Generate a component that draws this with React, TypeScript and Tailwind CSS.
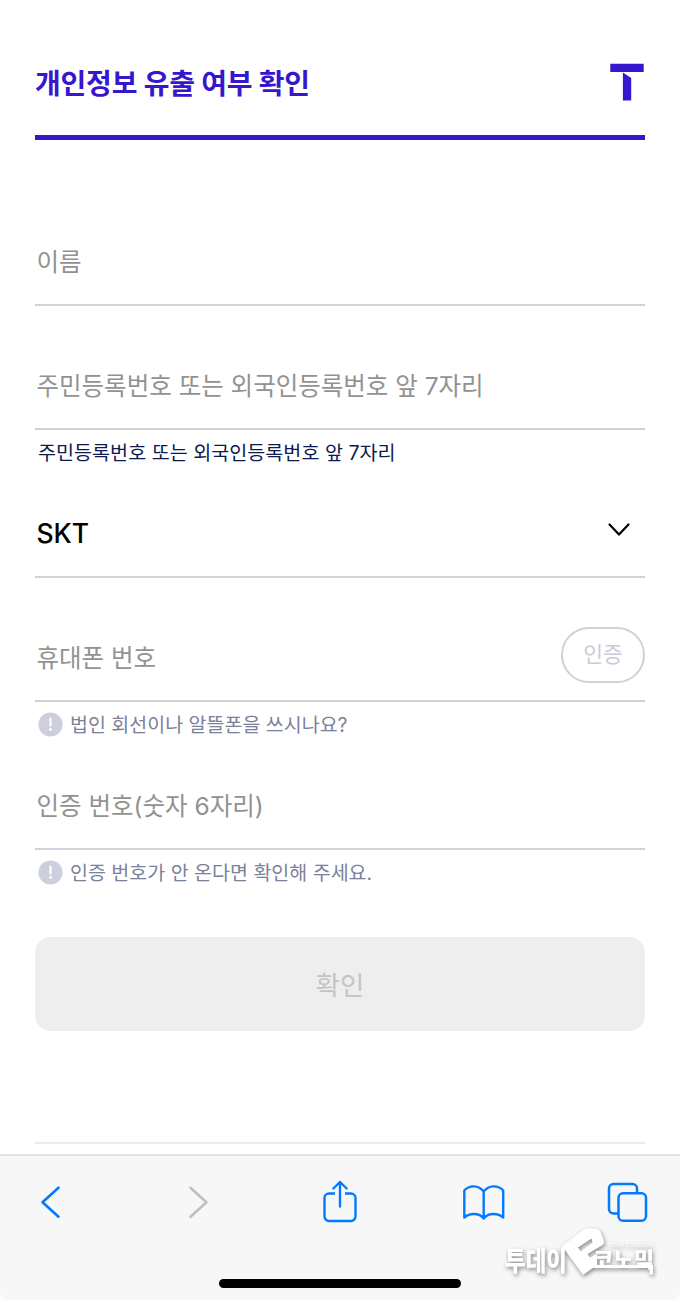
import React, { FC, useState } from 'react'

interface FieldProps {
  placeholder: string,
  value: string,
  onChange: (value: string) => void,
  children?: React.ReactNode
}

const Field: FC<FieldProps> = ({ placeholder, value, onChange, children }) => {
  return (
    <div className="flex h-[88px] items-center border-b-2 border-[#cfd1dc]">
      <input
        className="h-full min-w-0 flex-1 bg-transparent pl-[1.5px] pt-[2px] text-[24.5px] font-[380] text-black outline-none placeholder:text-[#929292] placeholder:opacity-100"
        type="text"
        placeholder={placeholder}
        value={value}
        onChange={e => onChange(e.target.value)} />
      {children}
    </div>
  )
}

interface NoticeProps {
  text: string
}

const Notice: FC<NoticeProps> = ({ text }) => {
  return (
    <div className="flex h-11 items-center gap-[7px] pl-[3px] text-[19.5px] font-[380] text-[#7b819b]">
      <svg className="mt-px h-[25px] w-[25px] shrink-0" viewBox="0 0 25 25">
        <circle cx="12.5" cy="12.5" r="12.1" fill="#cdd0dc" />
        <path d="M12.5 6.5v7.2" stroke="#fff" strokeWidth="2.2" strokeLinecap="round" />
        <circle cx="12.5" cy="17.5" r="1.4" fill="#fff" />
      </svg>
      <span className="whitespace-nowrap pt-[3px]">{text}</span>
    </div>
  )
}

const Toolbar: FC = () => {
  return (
    <div className="h-[146px] rounded-b-lg border-t-2 border-[#e3e3e3] bg-[#f7f7f7]">
      <div className="flex h-[92px] items-center pl-[38px] text-[#007aff]">
        <svg className="h-11 w-6" viewBox="0 0 24 44" fill="none" stroke="currentColor" strokeWidth="2.6" strokeLinecap="round" strokeLinejoin="round">
          <path d="M20.5 7.7L4.5 22.2l16 14.5" />
        </svg>
        <svg className="ml-[124px] h-11 w-6 text-[#bfbfbf]" viewBox="0 0 24 44" fill="none" stroke="currentColor" strokeWidth="2.6" strokeLinecap="round" strokeLinejoin="round">
          <path d="M4.5 7.7l16 14.5-16 14.5" />
        </svg>
        <svg className="ml-28 h-11 w-9" viewBox="0 0 36 44" fill="none" stroke="currentColor" strokeWidth="2.4" strokeLinecap="round" strokeLinejoin="round">
          <path d="M13 13.5H7A4.5 4.5 0 0 0 2.5 18v18.500A4.500 4.500 0 0 0 7 41h22a4.500 4.500 0 0 0 4.500-4.500V18a4.500 4.500 0 0 0-4.500-4.500h-6" strokeLinecap="butt" />
          <path d="M18 26.500V2M11.300 8.500L18 2l6.700 6.500" />
        </svg>
        <svg className="ml-26 h-11 w-11" viewBox="0 0 44 44" fill="none" stroke="currentColor" strokeWidth="2.4" strokeLinecap="round" strokeLinejoin="round">
          <path d="M21.700 11.500C16.500 4.800 7.500 4.800 2.300 10.500V37.500C7.500 33 17 32.500 21.700 38.500c4.800-6 14.200-5.500 19.500-1V10.500C36 4.800 27 4.800 21.700 11.500zM21.700 11.500V38" />
        </svg>
        <svg className="ml-[99px] h-11 w-11" viewBox="0 0 44 44" fill="none" stroke="currentColor" strokeWidth="2.5">
          <path d="M13.500 33.500H8.500A4.500 4.500 0 0 1 4 29V8.500A4.500 4.500 0 0 1 8.500 4h19A4.500 4.500 0 0 1 32 8.500v4.500" />
          <rect x="13.500" y="13.200" width="27.500" height="27.500" rx="4.500" />
        </svg>
      </div>
      <div className="mx-auto mt-[31px] h-[9px] w-[242px] rounded-full bg-black"></div>
    </div>
  )
}

const Watermark: FC = () => {
  return (
    <svg className="absolute left-[500px] top-[1220px] h-[70px] w-[170px] drop-shadow-[1px_2px_2px_rgba(0,0,0,0.45)]" viewBox="0 0 170 70">
      <g fill="#fff">
        <text x="5" y="51" fontSize="27" fontWeight="900" textLength="62" lengthAdjust="spacingAndGlyphs">투데이</text>
        <text x="93" y="47" fontSize="21" fontWeight="900" textLength="61" lengthAdjust="spacingAndGlyphs">코노믹</text>
        <text x="108" y="26.5" fontFamily="'Liberation Sans', sans-serif" fontSize="5.5" opacity="0.8" textLength="45" lengthAdjust="spacingAndGlyphs">TODAY ECONOMIC</text>
        <path d="M92 45h61v9.500h-3.500V48H92z" />
        {/* tilted "e" emblem */}
        <path fillRule="evenodd" d="M62 26L84 9.500q3-1.500 7-1.300l6 .8q2.500.5 3.500 3l3.200 8q1 3-1 5L87.500 34l2.500 3.500 7-3.500v11L83 55zM78 27.500L81 31.500 92.500 22.500l-1-4z" />
      </g>
    </svg>
  )
}

const App: FC = () => {
  const [name, setName] = useState<string>('')
  const [idNumber, setIdNumber] = useState<string>('')
  const [phone, setPhone] = useState<string>('')
  const [code, setCode] = useState<string>('')

  return (
    <div className="relative flex h-[1300px] w-[680px] flex-col overflow-hidden bg-white font-[Inter,'Noto_Sans_CJK_KR',sans-serif]">
      <header className="mx-[35px] flex h-[140px] items-start justify-between border-b-[5px] border-[#3617ce] pt-[60px]">
        <h1 className="mt-[2px] whitespace-nowrap text-[28px] leading-[44px] font-bold tracking-[-0.2px] text-[#3617ce]">개인정보 유출 여부 확인</h1>
        <svg className="mr-px mt-[3px] h-[38px] w-[34px]" viewBox="0 0 34 38" fill="#3617ce">
          <path d="M.3 .8h33.400v8.200H.3zM12.900 9.500l8.300 5.500v22.500h-8.300z" />
        </svg>
      </header>

      <main className="mx-[35px] flex flex-1 flex-col pt-[78px]">
        <Field placeholder="이름" value={name} onChange={setName} />

        <div className="mt-9">
          <Field placeholder="주민등록번호 또는 외국인등록번호 앞 7자리" value={idNumber} onChange={setIdNumber} />
          <p className="flex h-11 items-center whitespace-nowrap pl-[3px] pt-[3px] text-[19.6px] font-[380] text-[#0c1a4f]">
            주민등록번호 또는 외국인등록번호 앞 7자리
          </p>
        </div>

        <button className="mt-4 flex h-[88px] items-center justify-between border-b-2 border-[#cfd1dc] pl-[1.5px] pr-[14px] text-[26.5px] text-black">
          <span className="pt-[2px] font-[450]">SKT</span>
          <svg className="mb-2 h-6 w-6" viewBox="0 0 24 24" fill="none" stroke="currentColor" strokeWidth="2.2" strokeLinecap="round" strokeLinejoin="round">
            <path d="M2.5 7.5L12 17.5l9.5-10" />
          </svg>
        </button>

        <div className="mt-9">
          <Field placeholder="휴대폰 번호" value={phone} onChange={setPhone}>
            <button className="mb-1 h-14 w-[84px] rounded-full border-2 border-[#cfd1dc] pb-px text-[21.5px] font-[380] text-[#c9ccd8]">인증</button>
          </Field>
          <Notice text="법인 회선이나 알뜰폰을 쓰시나요?" />
        </div>

        <div className="mt-4">
          <Field placeholder="인증 번호(숫자 6자리)" value={code} onChange={setCode} />
          <Notice text="인증 번호가 안 온다면 확인해 주세요." />
        </div>

        <button className="mt-[43px] h-[94px] rounded-2xl bg-[#eeeeee] pt-[3px] text-[26.5px] font-normal text-[#c4c4c4]">확인</button>
        <hr className="mt-[111px] border-t-2 border-[#ececec]" />
      </main>

      <Toolbar />
      <Watermark />
    </div>
  )
}

export default App
